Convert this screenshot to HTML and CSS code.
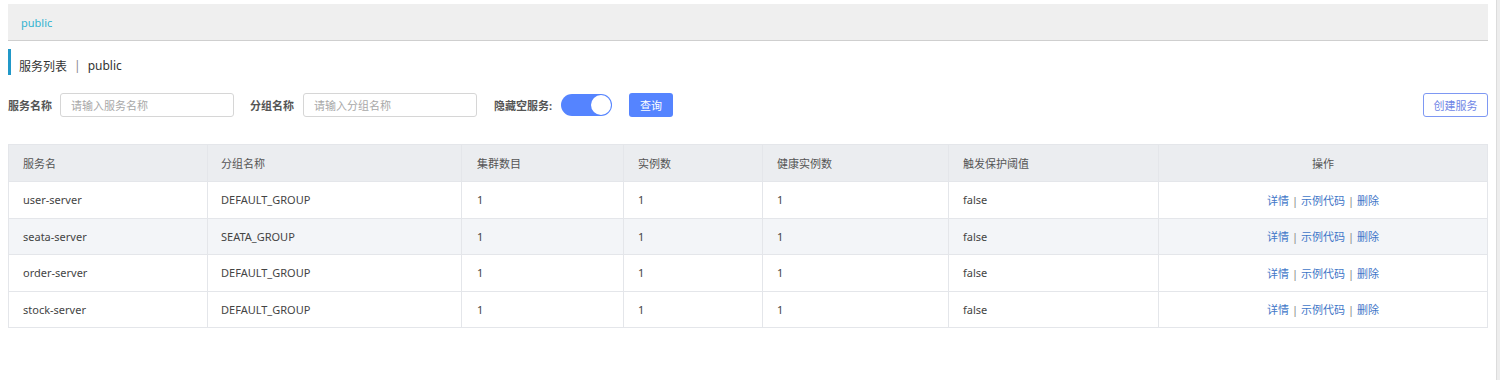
FILE: index.html
```html
<!DOCTYPE html>
<html lang="zh-CN">
<head>
    <meta charset="UTF-8">
    <title>服务列表 | public</title>
    <link rel="stylesheet" href="styles.css">
</head>
<body>
    <div class="page">
        <div class="ns-bar">
            <span class="ns-item">public</span>
        </div>

        <h2 class="page-title">服务列表<span class="sep">|</span>public</h2>

        <div class="filter-row">
            <div class="filter-left">
                <label class="filter-label">服务名称</label>
                <input class="filter-input" type="text" placeholder="请输入服务名称">
                <label class="filter-label group-label">分组名称</label>
                <input class="filter-input" type="text" placeholder="请输入分组名称">
                <label class="filter-label hide-label">隐藏空服务:</label>
                <span class="switch"><span class="knob"></span></span>
                <button class="btn-primary">查询</button>
            </div>
            <button class="btn-outline">创建服务</button>
        </div>

        <table class="svc-table">
            <thead>
                <tr>
                    <th class="c1">服务名</th>
                    <th class="c2">分组名称</th>
                    <th class="c3">集群数目</th>
                    <th class="c4">实例数</th>
                    <th class="c5">健康实例数</th>
                    <th class="c6">触发保护阈值</th>
                    <th class="ops">操作</th>
                </tr>
            </thead>
            <tbody>
                <tr>
                    <td>user-server</td><td>DEFAULT_GROUP</td><td>1</td><td>1</td><td>1</td><td>false</td>
                    <td class="ops"><a>详情</a><span class="bar">|</span><a>示例代码</a><span class="bar">|</span><a>删除</a></td>
                </tr>
                <tr class="alt">
                    <td>seata-server</td><td>SEATA_GROUP</td><td>1</td><td>1</td><td>1</td><td>false</td>
                    <td class="ops"><a>详情</a><span class="bar">|</span><a>示例代码</a><span class="bar">|</span><a>删除</a></td>
                </tr>
                <tr>
                    <td>order-server</td><td>DEFAULT_GROUP</td><td>1</td><td>1</td><td>1</td><td>false</td>
                    <td class="ops"><a>详情</a><span class="bar">|</span><a>示例代码</a><span class="bar">|</span><a>删除</a></td>
                </tr>
                <tr>
                    <td>stock-server</td><td>DEFAULT_GROUP</td><td>1</td><td>1</td><td>1</td><td>false</td>
                    <td class="ops"><a>详情</a><span class="bar">|</span><a>示例代码</a><span class="bar">|</span><a>删除</a></td>
                </tr>
            </tbody>
        </table>
    </div>
    <div class="scroll-track"></div>
</body>
</html>
```

FILE: styles.css
```css
* {
    margin: 0;
    padding: 0;
    box-sizing: border-box;
}

body {
    font-family: "Noto Sans", "Noto Sans CJK SC", sans-serif;
    font-size: 12px;
    color: #333;
    background: #fff;
    height: 380px;
    overflow: hidden;
    display: flex;
}

.page {
    width: 1488px;
    padding: 4px 0 0 8px;
}

.ns-bar {
    height: 37px;
    background: #efefef;
    border-bottom: 1px solid #cfcfcf;
    display: flex;
    align-items: center;
    padding-left: 13px;
}

.ns-item {
    color: #33b3d0;
    font-size: 11px;
}

.page-title {
    margin-top: 8px;
    height: 26px;
    border-left: 3px solid #2198c8;
    padding-left: 8px;
    font-size: 12px;
    font-weight: normal;
    color: #333;
    display: flex;
    align-items: center;
    padding-top: 7px;
}

.sep {
    margin: 0 7px;
    color: #888;
}

.filter-row {
    margin-top: 18px;
    display: flex;
    justify-content: space-between;
    align-items: center;
    height: 24px;
}

.filter-left {
    display: flex;
    align-items: center;
}

.filter-label {
    font-size: 11px;
    font-weight: bold;
    color: #555;
    margin-right: 8px;
}

.group-label {
    margin-right: 9px;
}

.filter-input {
    width: 174px;
    height: 24px;
    border: 1px solid #d6d6d6;
    border-radius: 3px;
    padding: 0 10px;
    font-family: inherit;
    font-size: 11px;
    margin-right: 16px;
    outline: none;
}

.filter-input::placeholder {
    color: #a8a8a8;
}

.hide-label {
    margin-left: 1px;
    margin-right: 9px;
}

.switch {
    width: 51px;
    height: 22px;
    border-radius: 11px;
    background: #5584ff;
    position: relative;
    margin-right: 17px;
}

.knob {
    position: absolute;
    right: 1px;
    top: 1px;
    width: 20px;
    height: 20px;
    border-radius: 50%;
    background: #fff;
}

.btn-primary {
    width: 44px;
    height: 24px;
    border: none;
    border-radius: 3px;
    background: #5584ff;
    color: #fff;
    font-family: inherit;
    font-size: 11px;
}

.btn-outline {
    width: 65px;
    height: 24px;
    border: 1px solid #7e98f3;
    border-radius: 3px;
    background: #fff;
    color: #6f86e6;
    font-family: inherit;
    font-size: 11px;
}

.svc-table {
    margin-top: 27px;
    width: 1480px;
    border-collapse: collapse;
    table-layout: fixed;
    font-size: 11px;
}

.svc-table th,
.svc-table td {
    border: 1px solid #e4e6ea;
    height: 36.5px;
    text-align: left;
    padding: 0 14px;
    font-weight: normal;
    color: #444;
}

.svc-table th {
    background: #ebedf0;
    color: #555;
    height: 37px;
}

.svc-table .c1 { width: 199px; }
.svc-table .c2 { width: 254px; padding-left: 13px; }
.svc-table .c3 { width: 162px; padding-left: 15px; }
.svc-table .c4 { width: 139px; padding-left: 14px; }
.svc-table .c5 { width: 186px; }
.svc-table .c6 { width: 210px; }

.svc-table td:nth-child(2) { padding-left: 13px; }
.svc-table td:nth-child(3) { padding-left: 15px; }

.svc-table .ops {
    text-align: center;
}

.svc-table tr.alt td {
    background: #f3f5f8;
}

.ops a {
    color: #3f77c8;
}

.ops .bar {
    color: #888;
    margin: 0 3px;
}

.scroll-track {
    margin-left: 8px;
    width: 4px;
    background: #ededed;
    border-left: 1px solid #dcdcdc;
}
```
